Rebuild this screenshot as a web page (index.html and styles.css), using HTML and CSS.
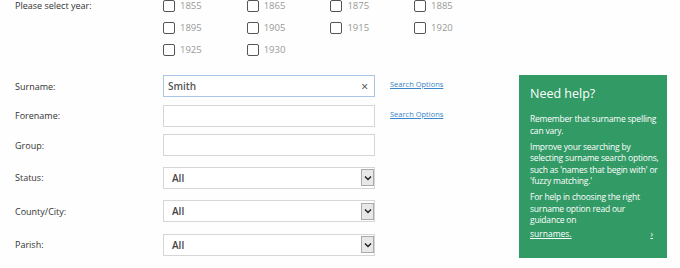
FILE: index.html
```html
<!DOCTYPE html>
<html lang="en">
<head>
  <meta charset="UTF-8" />
  <title>Search</title>
  <link rel="stylesheet" href="styles.css">
</head>
<body>

<div class="years">
  <div class="label">Please select year:</div>
  <div class="year-grid">
    <label class="year"><span class="box"></span>1855</label>
    <label class="year"><span class="box"></span>1865</label>
    <label class="year"><span class="box"></span>1875</label>
    <label class="year"><span class="box"></span>1885</label>
    <label class="year"><span class="box"></span>1895</label>
    <label class="year"><span class="box"></span>1905</label>
    <label class="year"><span class="box"></span>1915</label>
    <label class="year"><span class="box"></span>1920</label>
    <label class="year"><span class="box"></span>1925</label>
    <label class="year"><span class="box"></span>1930</label>
  </div>
</div>

<div class="main">
  <div class="fields">
    <div class="row">
      <div class="label">Surname:</div>
      <div class="input active"><span>Smith</span><span class="clear">&times;</span></div>
      <a class="opts" href="#">Search Options</a>
    </div>
    <div class="row">
      <div class="label">Forename:</div>
      <div class="input"></div>
      <a class="opts" href="#">Search Options</a>
    </div>
    <div class="row">
      <div class="label">Group:</div>
      <div class="input"></div>
    </div>
    <div class="row sel">
      <div class="label">Status:</div>
      <div class="input select"><span>All</span><span class="arrow"><svg width="8" height="6" viewBox="0 0 8 6"><path d="M1 1.5 L4 4.5 L7 1.5" fill="none" stroke="#222" stroke-width="1.5"/></svg></span></div>
    </div>
    <div class="row sel">
      <div class="label">County/City:</div>
      <div class="input select"><span>All</span><span class="arrow"><svg width="8" height="6" viewBox="0 0 8 6"><path d="M1 1.5 L4 4.5 L7 1.5" fill="none" stroke="#222" stroke-width="1.5"/></svg></span></div>
    </div>
    <div class="row sel">
      <div class="label">Parish:</div>
      <div class="input select"><span>All</span><span class="arrow"><svg width="8" height="6" viewBox="0 0 8 6"><path d="M1 1.5 L4 4.5 L7 1.5" fill="none" stroke="#222" stroke-width="1.5"/></svg></span></div>
    </div>
  </div>

  <div class="help">
    <h3>Need help?</h3>
    <p>Remember that surname spelling<br>can vary.</p>
    <p>Improve your searching by<br>selecting surname search options,<br>such as 'names that begin with' or<br>'fuzzy matching.'</p>
    <p>For help in choosing the right<br>surname option read our<br>guidance on</p>
    <div class="more"><a href="#">surnames.</a><a href="#">&rsaquo;</a></div>
  </div>
</div>

</body>
</html>
```

FILE: styles.css
```css
body {
  font-family: "Open Sans", Arial, sans-serif;
  font-size: 9px;
  color: #333;
  background: #fdfefd;
  margin: 0;
  padding: 0 0 0 15px;
}
.label {
  width: 148px;
  flex: none;
}
.years {
  display: flex;
}
.years .label {
  line-height: 12px;
}
.year-grid {
  display: grid;
  grid-template-columns: repeat(4, 83.7px);
  row-gap: 10px;
}
.year {
  display: flex;
  align-items: center;
  gap: 5px;
  color: #999;
  font-size: 9.5px;
  line-height: 12px;
}
.box {
  width: 10px;
  height: 10px;
  border: 1px solid #555;
  border-radius: 2px;
  background: #fff;
}
.main {
  display: flex;
  margin-top: 19px;
}
.fields {
  width: 504px;
  display: flex;
  flex-direction: column;
}
.row {
  display: flex;
  align-items: center;
  height: 22px;
  margin-bottom: 7.5px;
}
.row.sel {
  margin-top: 3px;
  margin-bottom: 8.5px;
}
.input {
  display: flex;
  align-items: center;
  justify-content: space-between;
  width: 212px;
  height: 22px;
  padding: 0 4px;
  box-sizing: border-box;
  border: 1px solid #d6d6d6;
  background: #fff;
  font-size: 10px;
  color: #444;
}
.input.active {
  border-color: #a9c6e8;
  font-weight: 600;
  color: #555;
}
.clear {
  font-weight: 400;
  font-size: 12px;
  color: #444;
  margin-right: 2px;
}
.select {
  padding-right: 0;
}
.select span:first-child {
  font-weight: 600;
  padding-left: 4px;
}
.arrow {
  width: 11px;
  height: 15px;
  border: 1px solid #aaa;
  background: #e8e8e8;
  display: flex;
  align-items: center;
  justify-content: center;
}
.opts {
  margin-left: 15px;
  color: #3a86c8;
  font-size: 7.5px;
  align-self: flex-start;
  margin-top: 4px;
}
.help {
  width: 148px;
  height: 183px;
  box-sizing: border-box;
  background: #329a65;
  color: #fff;
  padding: 8px 11px;
}
.help h3 {
  font-size: 12.5px;
  font-weight: 400;
  margin: 2px 0 11px;
}
.help p {
  margin: 0 0 4.5px;
  line-height: 11.5px;
  font-size: 8.5px;
  letter-spacing: -0.2px;
  white-space: nowrap;
}
.more {
  display: flex;
  justify-content: space-between;
  font-size: 8.5px;
  margin-top: -2px;
}
.more a {
  color: #fff;
}
.more a:last-child {
  margin-right: 3px;
}
```
